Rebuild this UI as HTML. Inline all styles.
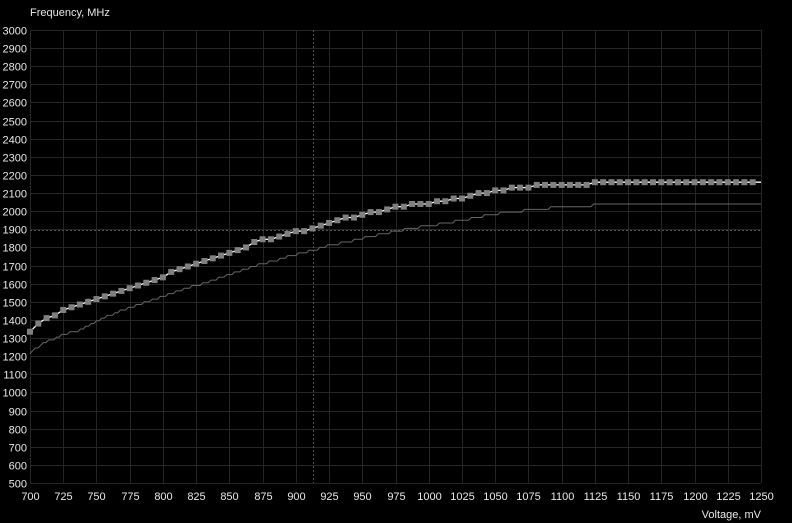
<!DOCTYPE html>
<html><head><meta charset="utf-8"><style>
html,body{margin:0;padding:0;background:#000;width:792px;height:523px;overflow:hidden}
svg{display:block}
text{font-family:"Liberation Sans",sans-serif;font-size:11px;fill:#e8e8e8}
</style></head><body>
<svg id="s" width="792" height="523" xmlns="http://www.w3.org/2000/svg">
<text x="30" y="16">Frequency, MHz</text>
<text x="761" y="518" text-anchor="end">Voltage, mV</text>
<g id="g"></g>
</svg>
<script>
var NS="http://www.w3.org/2000/svg",g=document.getElementById('g');
function el(n,a){var e=document.createElementNS(NS,n);for(var k in a)e.setAttribute(k,a[k]);g.appendChild(e);return e;}
var X0=30,X1=761,Y0=483,Y1=30;
function px(v){return X0+(v-700)/550*(X1-X0);}
function py(f){return Y0-(f-500)/2500*(Y0-Y1);}
for(var f=500;f<=3000;f+=100){var y=Math.round(py(f))+0.5;el('line',{x1:X0,x2:X1,y1:y,y2:y,stroke:'#262626','stroke-width':1});
var t=el('text',{x:27,y:y+4,'text-anchor':'end'});t.textContent=f;}
for(var v=700;v<=1250;v+=25){var x=Math.round(px(v))+0.5;el('line',{x1:x,x2:x,y1:Y1,y2:Y0,stroke:'#262626','stroke-width':1});
var t=el('text',{x:x,y:500,'text-anchor':'middle'});t.textContent=v;}
el('line',{x1:313.5,x2:313.5,y1:Y1,y2:Y0,stroke:'#555','stroke-dasharray':'2,2'});
el('line',{x1:X0,x2:X1,y1:230.5,y2:230.5,stroke:'#555','stroke-dasharray':'2,2'});
function interp(a,v){for(var i=0;i<a.length-1;i++){if(v<=a[i+1][0]){var t=(v-a[i][0])/(a[i+1][0]-a[i][0]);return a[i][1]+t*(a[i+1][1]-a[i][1]);}}return a[a.length-1][1];}
var lo=[[700,1220],[710,1270],[725,1320],[740,1350],[750,1395],[775,1470],[800,1530],[825,1590],[850,1650],[875,1710],[900,1760],[925,1810],[950,1850],[975,1890],[1000,1920],[1025,1950],[1050,1985],[1075,2005],[1100,2025],[1122,2030],[1125,2040],[1250,2040]];
var hi=[[700,1340],[705,1380],[725,1450],[750,1510],[775,1580],[800,1640],[825,1710],[850,1770],[875,1840],[900,1885],[912,1905],[925,1940],[950,1980],[975,2020],[1000,2045],[1025,2075],[1050,2110],[1075,2135],[1090,2150],[1120,2150],[1122,2165],[1250,2165]];
var d='';for(var v=700;v<=1250;v+=2){var f=Math.round(interp(lo,v)/15)*15;d+=(v==700?'M':'L')+px(v).toFixed(1)+','+py(f).toFixed(1);}
el('path',{d:d,fill:'none',stroke:'#666','stroke-width':1});
var pts=[];for(var v=700;v<=1250.01;v+=6.25){var f=Math.round(interp(hi,v)/15)*15;pts.push([px(v),py(f)]);}
var d2='';pts.forEach(function(p,i){d2+=(i?'L':'M')+p[0].toFixed(1)+','+p[1].toFixed(1);});
el('path',{d:d2,fill:'none',stroke:'#fff','stroke-width':1.3});
pts.forEach(function(p){if(p[0]<X1-3)el('rect',{x:p[0]-3,y:p[1]-3,width:6,height:6,fill:'#808080'});});
</script>
</body></html>
